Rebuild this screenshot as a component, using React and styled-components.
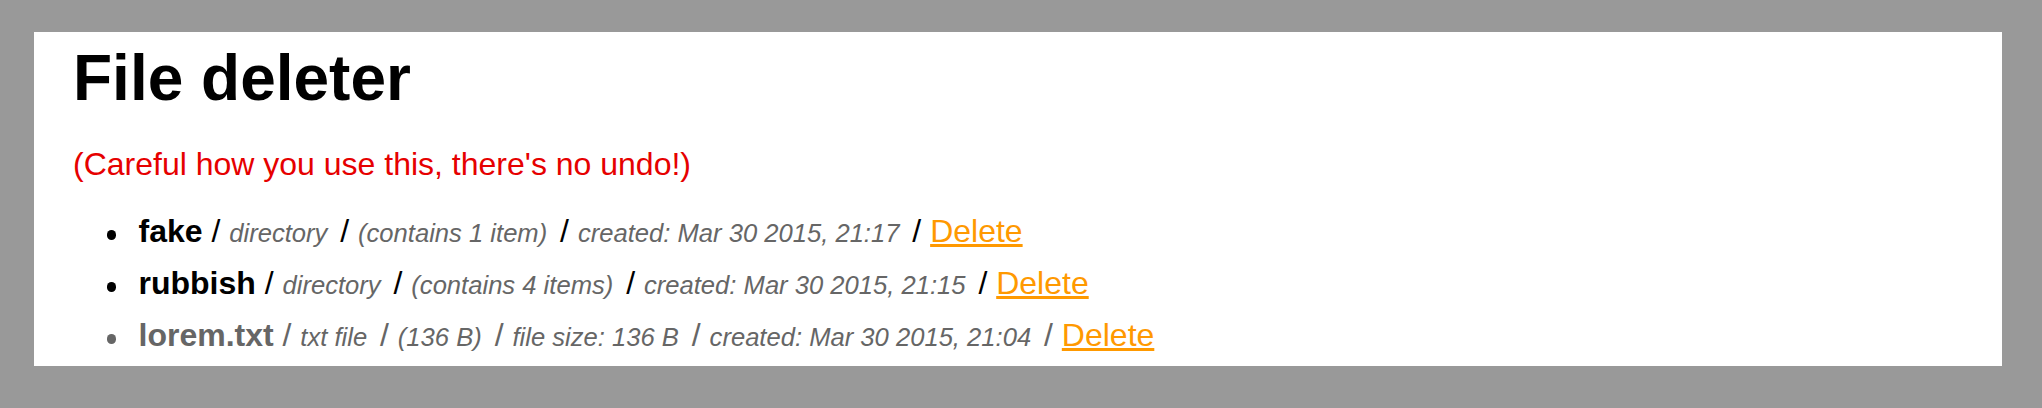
import React from 'react';
import styled, { createGlobalStyle } from 'styled-components';

const GlobalStyle = createGlobalStyle`
  html, body {
    margin: 0;
    padding: 0;
    background: #999999;
  }
  body {
    font-family: "Liberation Sans", Arial, Helvetica, sans-serif;
    padding: 32px 40px 0 34px;
  }
`;

const Panel = styled.div`
  background: #ffffff;
  padding: 9px 39px 5px 39px;
`;

const Title = styled.h1`
  margin: 0;
  font-size: 64px;
  line-height: 74px;
  font-weight: 700;
  color: #000;
`;

const Warning = styled.p`
  margin: 31px 0 0;
  font-size: 32px;
  line-height: 37px;
  color: #e60000;
`;

const FileList = styled.ul`
  list-style: none;
  margin: 22px 0 0;
  padding: 0 0 0 65.5px;
`;

const Item = styled.li`
  font-size: 32px;
  line-height: 52px;
  height: 52px;
  white-space: nowrap;
  color: ${(p) => (p.$file ? '#666666' : '#000000')};

  &::before {
    content: '';
    display: inline-block;
    width: 9.5px;
    height: 9.5px;
    border-radius: 50%;
    background: currentColor;
    margin: 0 22.3px 0 -31.8px;
    vertical-align: 2.5px;
  }
`;

const Name = styled.strong`
  font-weight: 700;
`;

const Meta = styled.em`
  font-style: italic;
  font-size: 0.8em;
  line-height: 1;
  color: #666666;
  margin-right: 4px;
`;

const DeleteLink = styled.a`
  color: #ff9900;
  text-decoration: underline;
  cursor: pointer;
`;

const entries = [
  {
    name: 'fake',
    meta: ['directory', '(contains 1 item)', 'created: Mar 30 2015, 21:17'],
  },
  {
    name: 'rubbish',
    meta: ['directory', '(contains 4 items)', 'created: Mar 30 2015, 21:15'],
  },
  {
    name: 'lorem.txt',
    file: true,
    meta: ['txt file', '(136 B)', 'file size: 136 B', 'created: Mar 30 2015, 21:04'],
  },
];

function App() {
  return (
    <>
      <GlobalStyle />
      <Panel>
        <Title>File deleter</Title>
        <Warning>(Careful how you use this, there's no undo!)</Warning>
        <FileList>
          {entries.map((entry) => (
            <Item key={entry.name} $file={entry.file}>
              <Name>{entry.name}</Name>
              {' / '}
              {entry.meta.map((m) => (
                <React.Fragment key={m}>
                  <Meta>{m}</Meta>
                  {' / '}
                </React.Fragment>
              ))}
              <DeleteLink href="#">Delete</DeleteLink>
            </Item>
          ))}
        </FileList>
      </Panel>
    </>
  );
}

export default App;
